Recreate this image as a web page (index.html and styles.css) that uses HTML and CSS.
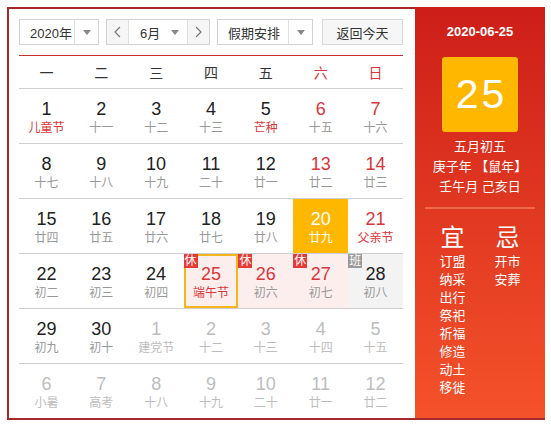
FILE: index.html
```html
<!DOCTYPE html>
<html lang="zh-CN">
<head>
<meta charset="utf-8">
<title>万年历</title>
<link rel="stylesheet" href="styles.css">
</head>
<body>
<div class="cal">
  <div class="main">
    <div class="toolbar">
      <div class="sel sel-year">
        <span class="sel-text">2020年</span>
        <span class="sel-arrow"><svg width="8" height="5" viewBox="0 0 8 5"><polygon points="0,0 8,0 4,5" fill="#888"/></svg></span>
      </div>
      <div class="sel sel-month">
        <span class="nav"><svg width="7" height="12" viewBox="0 0 7 12"><polyline points="6,1 1,6 6,11" fill="none" stroke="#777" stroke-width="1.2"/></svg></span>
        <span class="sel-text month-text">6月</span>
        <span class="month-arrow"><svg width="8" height="5" viewBox="0 0 8 5"><polygon points="0,0 8,0 4,5" fill="#888"/></svg></span>
        <span class="nav"><svg width="7" height="12" viewBox="0 0 7 12"><polyline points="1,1 6,6 1,11" fill="none" stroke="#777" stroke-width="1.2"/></svg></span>
      </div>
      <div class="sel sel-holiday">
        <span class="sel-text">假期安排</span>
        <span class="sel-arrow"><svg width="8" height="5" viewBox="0 0 8 5"><polygon points="0,0 8,0 4,5" fill="#888"/></svg></span>
      </div>
      <div class="btn-today">返回今天</div>
    </div>
    <div class="weekhead">
      <span>一</span><span>二</span><span>三</span><span>四</span><span>五</span><span class="wk">六</span><span class="wk">日</span>
    </div>
    <div class="grid">
      <div class="row">
        <div class="cell"><b>1</b><i class="fest">儿童节</i></div>
        <div class="cell"><b>2</b><i>十一</i></div>
        <div class="cell"><b>3</b><i>十二</i></div>
        <div class="cell"><b>4</b><i>十三</i></div>
        <div class="cell"><b>5</b><i class="fest">芒种</i></div>
        <div class="cell wk"><b>6</b><i>十五</i></div>
        <div class="cell wk"><b>7</b><i>十六</i></div>
      </div>
      <div class="row">
        <div class="cell"><b>8</b><i>十七</i></div>
        <div class="cell"><b>9</b><i>十八</i></div>
        <div class="cell"><b>10</b><i>十九</i></div>
        <div class="cell"><b>11</b><i>二十</i></div>
        <div class="cell"><b>12</b><i>廿一</i></div>
        <div class="cell wk"><b>13</b><i>廿二</i></div>
        <div class="cell wk"><b>14</b><i>廿三</i></div>
      </div>
      <div class="row">
        <div class="cell"><b>15</b><i>廿四</i></div>
        <div class="cell"><b>16</b><i>廿五</i></div>
        <div class="cell"><b>17</b><i>廿六</i></div>
        <div class="cell"><b>18</b><i>廿七</i></div>
        <div class="cell"><b>19</b><i>廿八</i></div>
        <div class="cell today"><b>20</b><i>廿九</i></div>
        <div class="cell wk"><b>21</b><i class="fest">父亲节</i></div>
      </div>
      <div class="row">
        <div class="cell"><b>22</b><i>初二</i></div>
        <div class="cell"><b>23</b><i>初三</i></div>
        <div class="cell"><b>24</b><i>初四</i></div>
        <div class="cell rest selected"><span class="badge">休</span><b>25</b><i class="fest">端午节</i></div>
        <div class="cell rest"><span class="badge">休</span><b>26</b><i>初六</i></div>
        <div class="cell rest"><span class="badge">休</span><b>27</b><i>初七</i></div>
        <div class="cell work"><span class="badge badge-work">班</span><b>28</b><i>初八</i></div>
      </div>
      <div class="row">
        <div class="cell"><b>29</b><i>初九</i></div>
        <div class="cell"><b>30</b><i>初十</i></div>
        <div class="cell other"><b>1</b><i>建党节</i></div>
        <div class="cell other"><b>2</b><i>十二</i></div>
        <div class="cell other"><b>3</b><i>十三</i></div>
        <div class="cell other"><b>4</b><i>十四</i></div>
        <div class="cell other"><b>5</b><i>十五</i></div>
      </div>
      <div class="row last">
        <div class="cell other"><b>6</b><i>小暑</i></div>
        <div class="cell other"><b>7</b><i>高考</i></div>
        <div class="cell other"><b>8</b><i>十八</i></div>
        <div class="cell other"><b>9</b><i>十九</i></div>
        <div class="cell other"><b>10</b><i>二十</i></div>
        <div class="cell other"><b>11</b><i>廿一</i></div>
        <div class="cell other"><b>12</b><i>廿二</i></div>
      </div>
    </div>
  </div>
  <div class="side">
    <div class="side-date">2020-06-25</div>
    <div class="side-day">25</div>
    <div class="side-lunar">
      <div>五月初五</div>
      <div>庚子年 【鼠年】</div>
      <div>壬午月 己亥日</div>
    </div>
    <div class="side-sep"></div>
    <div class="yiji">
      <div class="yj-col">
        <div class="yj-title">宜</div>
        <div>订盟</div><div>纳采</div><div>出行</div><div>祭祀</div><div>祈福</div><div>修造</div><div>动土</div><div>移徙</div>
      </div>
      <div class="yj-col">
        <div class="yj-title">忌</div>
        <div>开市</div><div>安葬</div>
      </div>
    </div>
  </div>
</div>
</body>
</html>
```

FILE: styles.css
```css
* { box-sizing: border-box; }
html, body { margin: 0; padding: 0; background: #fff; }
body {
  padding: 7px;
  font-family: "Liberation Sans", "Noto Sans CJK SC", sans-serif;
  color: #333;
}
.cal {
  width: 538px;
  height: 413px;
  display: flex;
  border-bottom: 2px solid #a8292c;
}
.main {
  width: 408px;
  border-left: 2px solid #a8292c;
  border-top: 2px solid #a8292c;
  padding: 10px 12px 0 10px;
}
.toolbar {
  height: 26px;
  display: flex;
  margin-bottom: 10px;
  font-size: 13px;
}
.sel {
  display: flex;
  align-items: stretch;
  border: 1px solid #d2d2d2;
  background: #fff;
  height: 26px;
}
.sel-text {
  display: flex;
  align-items: center;
  padding-left: 10px;
  flex: 1;
}
.sel-arrow {
  width: 24px;
  border-left: 1px solid #e0e0e0;
  display: flex;
  align-items: center;
  justify-content: center;
}
.sel-year { width: 80px; }
.sel-month { width: 104px; margin-left: 7px; }
.sel-holiday { width: 96px; margin-left: 7px; }
.sel-holiday .sel-text { padding-left: 10px; }
.nav {
  width: 22px;
  background: #f6f6f6;
  display: flex;
  align-items: center;
  justify-content: center;
}
.sel-month .nav:first-child { border-right: 1px solid #e0e0e0; }
.sel-month .nav:last-child { border-left: 1px solid #e0e0e0; }
.month-text { padding-left: 11px; }
.month-arrow {
  width: 16px;
  display: flex;
  align-items: center;
  justify-content: flex-start;
}
.btn-today {
  margin-left: 9px;
  width: 81px;
  height: 26px;
  border: 1px solid #d8d8d8;
  background: #f6f6f6;
  display: flex;
  align-items: center;
  justify-content: center;
}
.weekhead {
  display: grid;
  grid-template-columns: repeat(7, 1fr);
  border-top: 1px solid #c9302c;
  border-bottom: 1px solid #cfcfcf;
  height: 34px;
  align-items: center;
  font-size: 14px;
  text-align: center;
}
.weekhead .wk { color: #d9363a; }
.row {
  display: grid;
  grid-template-columns: repeat(7, 1fr);
  height: 55px;
  border-bottom: 1px solid #cfcfcf;
}
.row.last { border-bottom: none; height: 53px; }
.cell {
  position: relative;
  display: flex;
  flex-direction: column;
  align-items: center;
  padding-top: 10px;
}
.cell b {
  font-weight: normal;
  font-size: 18px;
  line-height: 20px;
  color: #222;
}
.cell i {
  font-style: normal;
  font-size: 12px;
  line-height: 16px;
  margin-top: 1px;
  color: #999;
}
.cell i.fest { color: #d9363a; }
.cell.wk b { color: #d9363a; }
.cell.other b, .cell.other i { color: #bdbdbd; }
.cell.today { background: #ffb700; }
.cell.today b, .cell.today i { color: #fff; }
.cell.rest { background: #fdeeee; }
.cell.rest b { color: #d9363a; }
.cell.work { background: #f3f3f3; }
.cell.selected { border: 2px solid #f5b51c; padding-top: 8px; }
.badge {
  position: absolute;
  top: 0;
  left: 0;
  width: 14px;
  height: 14px;
  background: #e63a36;
  color: #fff;
  font-size: 12px;
  line-height: 14px;
  text-align: center;
}
.cell.selected .badge { top: -2px; left: -2px; }
.badge-work { background: #9a9a9a; }
.side {
  width: 130px;
  height: 411px;
  background: linear-gradient(#cd1e19, #f4522a);
  color: #fff;
  display: flex;
  flex-direction: column;
  align-items: center;
  padding-top: 15px;
}
.side-date {
  font-size: 13px;
  font-weight: bold;
  line-height: 20px;
}
.side-day {
  margin-top: 15px;
  width: 76px;
  height: 75px;
  background: #ffb700;
  border-radius: 3px;
  font-size: 41px;
  letter-spacing: 3px;
  text-indent: 3px;
  display: flex;
  align-items: center;
  justify-content: center;
}
.side-lunar {
  margin-top: 5px;
  font-size: 13px;
  line-height: 20px;
  text-align: center;
}
.side-sep {
  margin-top: 10px;
  width: 110px;
  height: 2px;
  background: #ee6a4c;
}
.yiji {
  display: flex;
  margin-top: 14px;
}
.yj-col {
  width: 55px;
  display: flex;
  flex-direction: column;
  align-items: center;
  font-size: 13px;
  line-height: 18px;
}
.yj-title {
  font-size: 24px;
  line-height: 30px;
}
```
